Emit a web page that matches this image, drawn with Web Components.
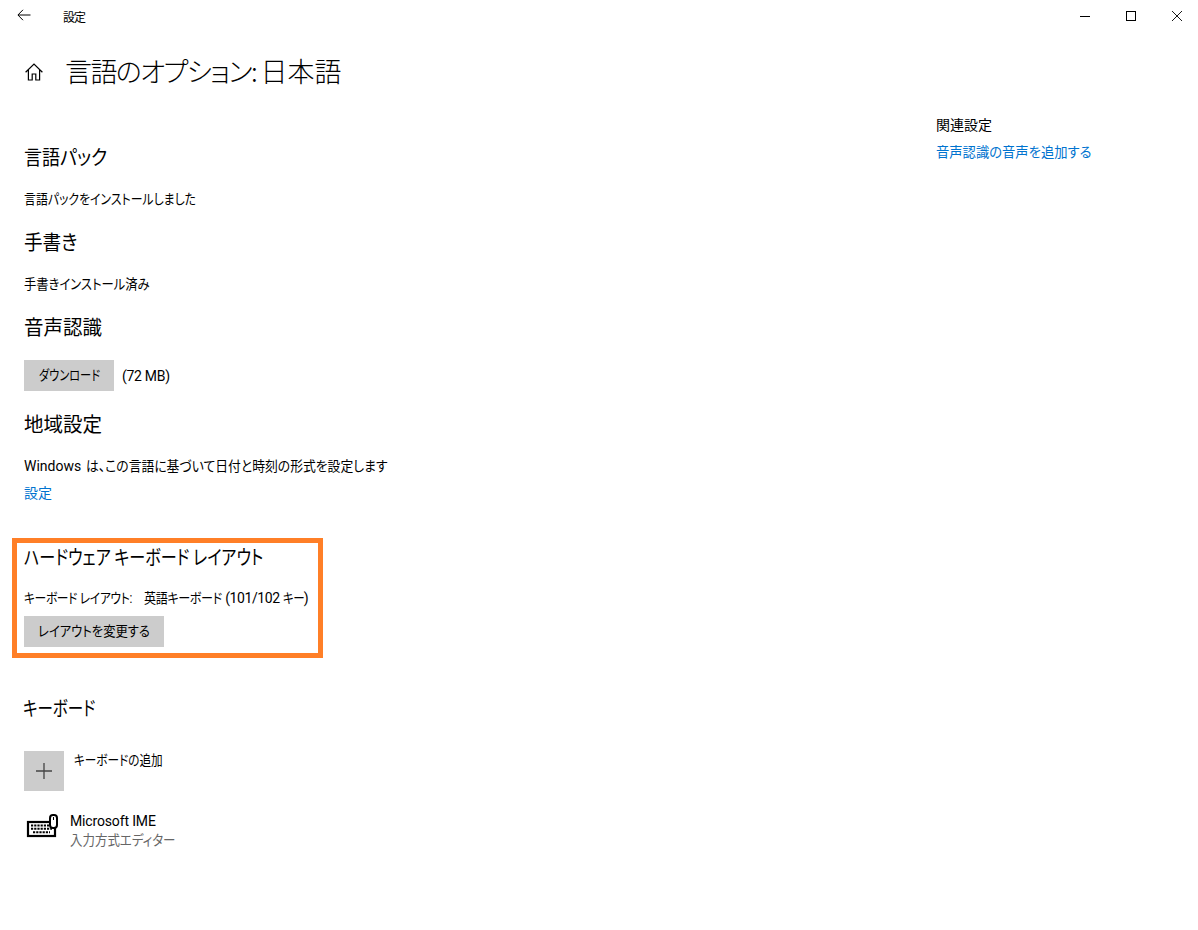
<!DOCTYPE html>
<html lang="ja">
<head>
<meta charset="utf-8">
<title>設定</title>
<style>
  html, body { margin: 0; padding: 0; background: #fff; height: 100%; overflow: hidden; }
  body {
    font-family: Roboto, "Noto Sans CJK JP", sans-serif;
    font-feature-settings: "palt";
    font-size: 14px;
    color: #000;
  }
</style>
</head>
<body>
<title-bar caption="設定"></title-bar>
<page-title caption="言語のオプション: " tail="日本語"></page-title>
<settings-layout>
  <settings-section caption="言語パック" style="--top: 51px; --sx: .9">
    <line-text><fit-text w="171" sx=".85">言語パックをインストールしました</fit-text></line-text>
  </settings-section>
  <settings-section caption="手書き" style="--sx: .93">
    <line-text><fit-text w="125" sx=".88">手書きインストール済み</fit-text></line-text>
  </settings-section>
  <settings-section caption="音声認識" style="--sx: .975; --under: 19px">
    <div style="display:flex;align-items:center;gap:8px">
      <flat-button width="90"><fit-text w="61" sx=".8">ダウンロード</fit-text></flat-button>
      <line-text style="letter-spacing:-.3px">(72 MB)</line-text>
    </div>
  </settings-section>
  <settings-section caption="地域設定" style="--sx: .975">
    <line-text>Windows <fit-text w="303" sx=".915" style="margin-left:1px">は、この言語に基づいて日付と時刻の形式を設定します</fit-text></line-text>
    <line-text link style="margin-top:7px">設定</line-text>
  </settings-section>
  <highlight-box>
    <settings-section caption="ハードウェア キーボード レイアウト" style="--top: 0px; --under: 17px; --sx: .805">
      <line-text style="letter-spacing:-.4px"><fit-text w="108" sx=".84">キーボード レイアウト:</fit-text> <fit-text w="78" sx=".86" style="margin-left:9px">英語キーボード</fit-text> (101/102 <fit-text w="21" sx=".82">キー</fit-text>)</line-text>
      <flat-button width="140" style="margin-top:8px"><fit-text w="112" sx=".88">レイアウトを変更する</fit-text></flat-button>
    </settings-section>
  </highlight-box>
  <settings-section caption="キーボード" style="--top: 36px; --under: 29px; --left: -1px; --sx: .775">
    <add-tile><fit-text w="89" sx=".83">キーボードの追加</fit-text></add-tile>
    <ime-row title-text="Microsoft IME" sub-text="入力方式エディター"></ime-row>
  </settings-section>
  <related-links slot="side"></related-links>
</settings-layout>

<script>
class TitleBar extends HTMLElement {
  constructor() {
    super();
    this.shadowDOM = this.attachShadow({mode: "open"});
  }
  connectedCallback() {
    this.shadowDOM.innerHTML = `
    <style>
      :host { display: flex; align-items: center; height: 32px; font-size: 12px; }
      .back { width: 48px; height: 32px; display: flex; align-items: center; justify-content: center; }
      .caption { margin-left: 15px; margin-top: 1px; flex: 1; letter-spacing: -1px; }
      .controls { display: flex; margin-right: -2px; }
      .controls div { width: 46px; height: 32px; display: flex; align-items: center; justify-content: center; }
      svg { display: block; }
    </style>
    <div class="back">
      <svg width="14" height="12" viewBox="0 0 14 12" fill="none" stroke="#000" stroke-width="1" style="margin-left:-1px;margin-top:-2px">
        <path d="M1 6H13.5M6 .8L.9 6l5.1 5.2"/>
      </svg>
    </div>
    <div class="caption">${this.getAttribute("caption")}</div>
    <div class="controls">
      <div><svg width="10" height="10" viewBox="0 0 10 10" fill="none" stroke="#000"><path d="M0 5.5H10"/></svg></div>
      <div><svg width="10" height="10" viewBox="0 0 10 10" fill="none" stroke="#000"><rect x=".5" y=".5" width="9" height="9"/></svg></div>
      <div><svg width="10" height="10" viewBox="0 0 10 10" fill="none" stroke="#000" stroke-width=".9"><path d="M0 0L10 10M10 0L0 10"/></svg></div>
    </div>`;
  }
}

class PageTitle extends HTMLElement {
  constructor() {
    super();
    this.shadowDOM = this.attachShadow({mode: "open"});
  }
  connectedCallback() {
    this.shadowDOM.innerHTML = `
    <style>
      :host { display: flex; align-items: center; height: 40px; margin-top: 20px; padding-left: 25px; }
      svg { display: block; margin-right: 24px; }
      h1 { margin: -3px 0 0 -2px; font-family: "Noto Sans CJK JP", sans-serif; font-size: 27px; font-weight: 300;
           line-height: 40px; letter-spacing: -1.6px; white-space: pre; }
      span { letter-spacing: 0; }
    </style>
    <svg width="18" height="18" viewBox="0 0 18 18" fill="none" stroke="#000" stroke-width="1.2">
      <path d="M.6 9.2L9 1l8.4 8.2M3.4 7v10h3.8v-6h3.6v6h3.8V7"/>
    </svg>
    <h1>${this.getAttribute("caption")}<span>${this.getAttribute("tail")}</span></h1>`;
  }
}

class SettingsLayout extends HTMLElement {
  constructor() {
    super();
    this.shadowDOM = this.attachShadow({mode: "open"});
  }
  connectedCallback() {
    this.shadowDOM.innerHTML = `
    <style>
      :host { display: grid; grid-template-columns: 913px 1fr; padding-left: 24px; }
      .side { padding-top: 23px; }
    </style>
    <main><slot></slot></main>
    <aside class="side"><slot name="side"></slot></aside>`;
  }
}

class SettingsSection extends HTMLElement {
  constructor() {
    super();
    this.shadowDOM = this.attachShadow({mode: "open"});
  }
  connectedCallback() {
    this.shadowDOM.innerHTML = `
    <style>
      :host { display: block; margin-top: var(--top, 19px); }
      h2 { margin: 0 0 var(--under, 18px) var(--left, 0); font-family: "Noto Sans CJK JP", sans-serif; font-size: 20px;
           font-weight: 400; line-height: 28px; white-space: nowrap; transform: scaleX(var(--sx, 1)); transform-origin: left; }
    </style>
    <h2>${this.getAttribute("caption")}</h2>
    <slot></slot>`;
  }
}

// squeezes kana-heavy text to the narrow widths of the original UI font
class FitText extends HTMLElement {
  constructor() {
    super();
    this.shadowDOM = this.attachShadow({mode: "open"});
  }
  connectedCallback() {
    this.shadowDOM.innerHTML = `
    <style>
      :host { display: inline-block; width: ${this.getAttribute("w")}px; white-space: nowrap; text-align: left;
              transform: scaleX(${this.getAttribute("sx")}); transform-origin: left; }
    </style>
    <slot></slot>`;
  }
}

class LineText extends HTMLElement {
  constructor() {
    super();
    this.shadowDOM = this.attachShadow({mode: "open"});
  }
  connectedCallback() {
    this.shadowDOM.innerHTML = `
    <style>
      :host { display: block; line-height: 20px; font-size: 14px; white-space: nowrap; }
      :host([link]) { color: #0073cf; }
    </style>
    <slot></slot>`;
  }
}

class FlatButton extends HTMLElement {
  constructor() {
    super();
    this.shadowDOM = this.attachShadow({mode: "open"});
  }
  connectedCallback() {
    this.shadowDOM.innerHTML = `
    <style>
      :host { display: block; width: ${this.getAttribute("width")}px; height: 31px; background: #ccc;
              text-align: center; line-height: 30px; font-size: 14px; }
    </style>
    <slot></slot>`;
  }
}

class HighlightBox extends HTMLElement {
  constructor() {
    super();
    this.shadowDOM = this.attachShadow({mode: "open"});
  }
  connectedCallback() {
    this.shadowDOM.innerHTML = `
    <style>
      :host { display: block; box-sizing: border-box; width: 311px; margin: 35px 0 0 -12px;
              border: 5px solid #ff7f27; padding: 0 7px 6px; }
    </style>
    <slot></slot>`;
  }
}

class AddTile extends HTMLElement {
  constructor() {
    super();
    this.shadowDOM = this.attachShadow({mode: "open"});
  }
  connectedCallback() {
    this.shadowDOM.innerHTML = `
    <style>
      :host { display: flex; height: 40px; gap: 10px; font-size: 14px; }
      .tile { width: 40px; height: 40px; background: #ccc; display: flex; align-items: center; justify-content: center; }
      svg { display: block; }
      .label { line-height: 20px; margin-top: -1px; }
    </style>
    <div class="tile">
      <svg width="16" height="16" viewBox="0 0 16 16" fill="none" stroke="#444" stroke-width="1.3"><path d="M8 0V16M0 8H16"/></svg>
    </div>
    <div class="label"><slot></slot></div>`;
  }
}

class ImeRow extends HTMLElement {
  constructor() {
    super();
    this.shadowDOM = this.attachShadow({mode: "open"});
  }
  connectedCallback() {
    this.shadowDOM.innerHTML = `
    <style>
      :host { display: flex; margin-top: 20px; padding-left: 2px; font-size: 14px; }
      svg { display: block; margin: 3px 12px 0 0; }
      .t { line-height: 20px; letter-spacing: -.15px; }
      .s { line-height: 20px; color: #666; margin-top: -1px; }
    </style>
    <svg width="32" height="26" viewBox="0 0 32 26">
      <rect x="2" y="8" width="27" height="14" fill="none" stroke="#000" stroke-width="2.2"/>
      <path d="M5 11.5h18M5 14.8h21M7 18.2h17" stroke="#000" stroke-width="2" stroke-dasharray="2.2 1"/>
      <rect x="24" y="1" width="7" height="13" rx="3" fill="#fff" stroke="#000" stroke-width="2"/>
      <path d="M27.5 3v3" stroke="#000"/>
    </svg>
    <div>
      <div class="t">${this.getAttribute("title-text")}</div>
      <div class="s"><fit-text w="105" sx=".89">${this.getAttribute("sub-text")}</fit-text></div>
    </div>`;
  }
}

class RelatedLinks extends HTMLElement {
  constructor() {
    super();
    this.shadowDOM = this.attachShadow({mode: "open"});
  }
  connectedCallback() {
    this.shadowDOM.innerHTML = `
    <style>
      :host { display: block; font-size: 14px; line-height: 20px; margin-left: -1px; }
      .l { color: #0073cf; margin-top: 7px; }
    </style>
    <div>関連設定</div>
    <div class="l"><fit-text w="155" sx=".95">音声認識の音声を追加する</fit-text></div>`;
  }
}

customElements.define("title-bar", TitleBar);
customElements.define("page-title", PageTitle);
customElements.define("settings-layout", SettingsLayout);
customElements.define("settings-section", SettingsSection);
customElements.define("fit-text", FitText);
customElements.define("line-text", LineText);
customElements.define("flat-button", FlatButton);
customElements.define("highlight-box", HighlightBox);
customElements.define("add-tile", AddTile);
customElements.define("ime-row", ImeRow);
customElements.define("related-links", RelatedLinks);
</script>
</body>
</html>
